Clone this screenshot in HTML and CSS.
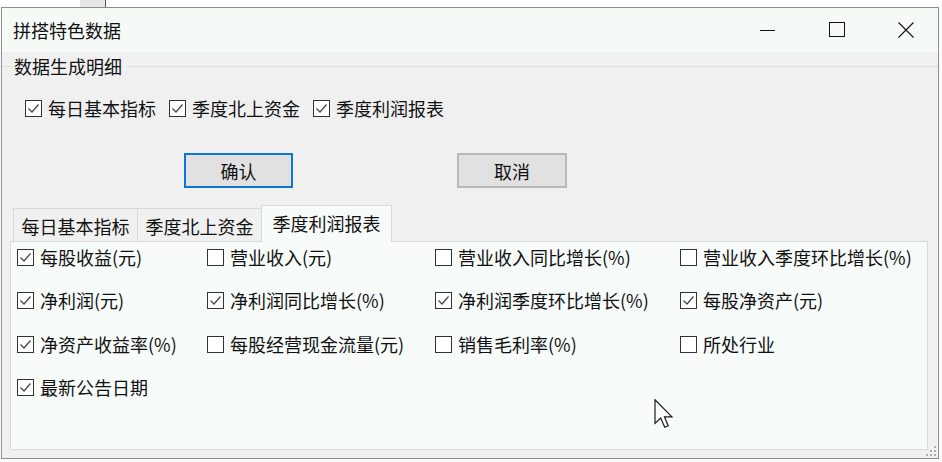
FILE: index.html
```html
<!DOCTYPE html>
<html lang="zh">
<head>
<meta charset="utf-8">
<title>拼搭特色数据</title>
<link rel="stylesheet" href="styles.css">
</head>
<body>
<div class="desk-strip"></div>
<div class="window">
  <div class="titlebar">
    <div class="title">拼搭特色数据</div>
    <div class="caps">
      <span class="cap"><svg width="16" height="16" viewBox="0 0 16 16"><path d="M0 8.5H15" stroke="#111" stroke-width="1"/></svg></span>
      <span class="cap"><svg width="16" height="16" viewBox="0 0 16 16"><rect x="0.5" y="0.5" width="15" height="14" fill="none" stroke="#111" stroke-width="1"/></svg></span>
      <span class="cap"><svg width="16" height="16" viewBox="0 0 16 16"><path d="M0.5 0.5L15.5 15.5M15.5 0.5L0.5 15.5" stroke="#111" stroke-width="1.1"/></svg></span>
    </div>
  </div>
  <div class="client">
    <div class="group-head"><span class="gl-left"></span><span class="group-label">数据生成明细</span><span class="gl-right"></span></div>
    <div class="opts">
      <div class="chk"><svg class="box" viewBox="0 0 17 17"><rect x="0.5" y="0.5" width="16" height="16" fill="#fff" stroke="#333"/><path d="M3.5 8.5L7 12L13.5 4.5" fill="none" stroke="#444" stroke-width="1.2"/></svg><span class="lbl">每日基本指标</span></div>
      <div class="chk"><svg class="box" viewBox="0 0 17 17"><rect x="0.5" y="0.5" width="16" height="16" fill="#fff" stroke="#333"/><path d="M3.5 8.5L7 12L13.5 4.5" fill="none" stroke="#444" stroke-width="1.2"/></svg><span class="lbl">季度北上资金</span></div>
      <div class="chk"><svg class="box" viewBox="0 0 17 17"><rect x="0.5" y="0.5" width="16" height="16" fill="#fff" stroke="#333"/><path d="M3.5 8.5L7 12L13.5 4.5" fill="none" stroke="#444" stroke-width="1.2"/></svg><span class="lbl">季度利润报表</span></div>
    </div>
    <div class="btns">
      <button class="btn btn-default">确认</button>
      <button class="btn btn-cancel">取消</button>
    </div>
    <div class="tabs">
      <div class="tab">每日基本指标</div>
      <div class="tab">季度北上资金</div>
      <div class="tab tab-active">季度利润报表</div>
    </div>
    <div class="panel">
      <div class="grid">
        <div class="chk"><svg class="box" viewBox="0 0 17 17"><rect x="0.5" y="0.5" width="16" height="16" fill="#fff" stroke="#333"/><path d="M3.5 8.5L7 12L13.5 4.5" fill="none" stroke="#444" stroke-width="1.2"/></svg><span class="lbl">每股收益(元)</span></div>
        <div class="chk"><svg class="box" viewBox="0 0 17 17"><rect x="0.5" y="0.5" width="16" height="16" fill="#fff" stroke="#333"/></svg><span class="lbl">营业收入(元)</span></div>
        <div class="chk"><svg class="box" viewBox="0 0 17 17"><rect x="0.5" y="0.5" width="16" height="16" fill="#fff" stroke="#333"/></svg><span class="lbl">营业收入同比增长(%)</span></div>
        <div class="chk"><svg class="box" viewBox="0 0 17 17"><rect x="0.5" y="0.5" width="16" height="16" fill="#fff" stroke="#333"/></svg><span class="lbl">营业收入季度环比增长(%)</span></div>

        <div class="chk"><svg class="box" viewBox="0 0 17 17"><rect x="0.5" y="0.5" width="16" height="16" fill="#fff" stroke="#333"/><path d="M3.5 8.5L7 12L13.5 4.5" fill="none" stroke="#444" stroke-width="1.2"/></svg><span class="lbl">净利润(元)</span></div>
        <div class="chk"><svg class="box" viewBox="0 0 17 17"><rect x="0.5" y="0.5" width="16" height="16" fill="#fff" stroke="#333"/><path d="M3.5 8.5L7 12L13.5 4.5" fill="none" stroke="#444" stroke-width="1.2"/></svg><span class="lbl">净利润同比增长(%)</span></div>
        <div class="chk"><svg class="box" viewBox="0 0 17 17"><rect x="0.5" y="0.5" width="16" height="16" fill="#fff" stroke="#333"/><path d="M3.5 8.5L7 12L13.5 4.5" fill="none" stroke="#444" stroke-width="1.2"/></svg><span class="lbl">净利润季度环比增长(%)</span></div>
        <div class="chk"><svg class="box" viewBox="0 0 17 17"><rect x="0.5" y="0.5" width="16" height="16" fill="#fff" stroke="#333"/><path d="M3.5 8.5L7 12L13.5 4.5" fill="none" stroke="#444" stroke-width="1.2"/></svg><span class="lbl">每股净资产(元)</span></div>

        <div class="chk"><svg class="box" viewBox="0 0 17 17"><rect x="0.5" y="0.5" width="16" height="16" fill="#fff" stroke="#333"/><path d="M3.5 8.5L7 12L13.5 4.5" fill="none" stroke="#444" stroke-width="1.2"/></svg><span class="lbl">净资产收益率(%)</span></div>
        <div class="chk"><svg class="box" viewBox="0 0 17 17"><rect x="0.5" y="0.5" width="16" height="16" fill="#fff" stroke="#333"/></svg><span class="lbl">每股经营现金流量(元)</span></div>
        <div class="chk"><svg class="box" viewBox="0 0 17 17"><rect x="0.5" y="0.5" width="16" height="16" fill="#fff" stroke="#333"/></svg><span class="lbl">销售毛利率(%)</span></div>
        <div class="chk"><svg class="box" viewBox="0 0 17 17"><rect x="0.5" y="0.5" width="16" height="16" fill="#fff" stroke="#333"/></svg><span class="lbl">所处行业</span></div>

        <div class="chk"><svg class="box" viewBox="0 0 17 17"><rect x="0.5" y="0.5" width="16" height="16" fill="#fff" stroke="#333"/><path d="M3.5 8.5L7 12L13.5 4.5" fill="none" stroke="#444" stroke-width="1.2"/></svg><span class="lbl">最新公告日期</span></div>
      </div>
    </div>
  </div>
  <svg class="grip" width="14" height="14" viewBox="0 0 14 14">
    <rect x="11" y="2" width="2" height="2" fill="#b0b0b0"/>
    <rect x="7" y="6" width="2" height="2" fill="#b0b0b0"/>
    <rect x="11" y="6" width="2" height="2" fill="#b0b0b0"/>
    <rect x="3" y="10" width="2" height="2" fill="#b0b0b0"/>
    <rect x="7" y="10" width="2" height="2" fill="#b0b0b0"/>
    <rect x="11" y="10" width="2" height="2" fill="#b0b0b0"/>
  </svg>
</div>
<svg class="cursor" width="20" height="30" viewBox="0 0 13 20">
  <path d="M0.5 0.5V16.3L4.3 12.7L7 18.8L9.3 17.8L6.8 11.9H11.8Z" fill="#fff" stroke="#1a1a1a" stroke-width="0.8" stroke-linejoin="miter"/>
</svg>
</body>
</html>
```

FILE: styles.css
```css
* { box-sizing: border-box; }
html, body { margin: 0; padding: 0; }
html { background: #fbfbfb; }
body {
  width: 942px;
  height: 462px;
  overflow: hidden;
  position: relative;
  font-family: "Noto Sans CJK SC", "Microsoft YaHei", sans-serif;
  font-size: 18px;
  color: #111;
}
.desk-strip {
  height: 7px;
  background: linear-gradient(to right, #ffffff 0, #ffffff 80px, #e6e6e6 80px, #e6e6e6 105px, #555 105px, #555 106px, #ffffff 106px);
}
.window {
  position: relative;
  margin-left: 1px;
  width: 938px;
  height: 452px;
  border: 1px solid #8e8e8e;
  display: flex;
  flex-direction: column;
  background: #f0f0f0;
}
.titlebar {
  height: 44px;
  background: #f5faf7;
  display: flex;
  align-items: center;
  flex: none;
}
.title {
  padding-left: 11px;
  line-height: 20px;
}
.caps {
  margin-left: auto;
  display: flex;
  height: 44px;
  margin-right: -2px;
}
.cap {
  width: 69px;
  height: 44px;
  display: flex;
  align-items: center;
  justify-content: center;
}
.cap svg { display: block; }
.client {
  flex: 1;
  display: flex;
  flex-direction: column;
  background: #f0f0f0;
}
.group-head {
  margin-top: 1px;
  height: 26px;
  display: flex;
  align-items: center;
}
.gl-left, .gl-right {
  height: 1px;
  background: #dcdcdc;
}
.gl-left { width: 10px; }
.gl-right { flex: 1; margin-left: 4px; }
.group-label {
  margin-left: 2px;
  line-height: 26px;
}
.opts {
  margin-top: 19px;
  height: 20px;
  padding-left: 23px;
  display: flex;
  align-items: center;
  gap: 13px;
}
.chk {
  display: flex;
  align-items: center;
  height: 17px;
  gap: 6px;
  white-space: nowrap;
}
.box {
  width: 17px;
  height: 17px;
  flex: none;
  display: block;
}
.lbl {
  line-height: 17px;
}
.btns {
  margin-top: 35px;
  height: 35px;
  padding-left: 182px;
  display: flex;
  gap: 164px;
}
.btn {
  font-family: inherit;
  font-size: 18px;
  color: #111;
  background: #e1e1e1;
  height: 35px;
  padding: 0;
  line-height: 20px;
  margin: 0;
}
.btn-default {
  width: 109px;
  border: 2px solid #0a78d4;
}
.btn-cancel {
  width: 110px;
  border: 2px solid #b8b8b8;
}
.tabs {
  margin-top: 17px;
  height: 37px;
  margin-bottom: -1px;
  padding-left: 11px;
  display: flex;
  align-items: flex-end;
  position: relative;
  z-index: 1;
}
.tab {
  height: 33px;
  margin-bottom: 1px;
  border: 1px solid #d9d9d9;
  border-bottom: none;
  background: #f0f0f0;
  display: flex;
  align-items: center;
  justify-content: center;
  line-height: 20px;
  width: 125px;
  padding-top: 1px;
}
.tab + .tab { margin-left: -1px; }
.tab-active {
  height: 37px;
  margin-bottom: 0;
  width: 131px;
  background: #f7fbf9;
  padding-top: 0;
  padding-bottom: 3px;
}
.panel {
  margin-left: 8px;
  margin-right: 10px;
  height: 209px;
  border: 1px solid #d9d9d9;
  background: #f7fbf9;
}
.grid {
  display: grid;
  grid-template-columns: 190px 228px 245px 1fr;
  grid-template-rows: 43px 44px 43px 43px;
  padding: 7px 0 0 6px;
  align-items: start;
}
.grip {
  position: absolute;
  right: 1px;
  bottom: 0px;
}
.cursor {
  position: absolute;
  left: 654px;
  top: 399px;
}
```
